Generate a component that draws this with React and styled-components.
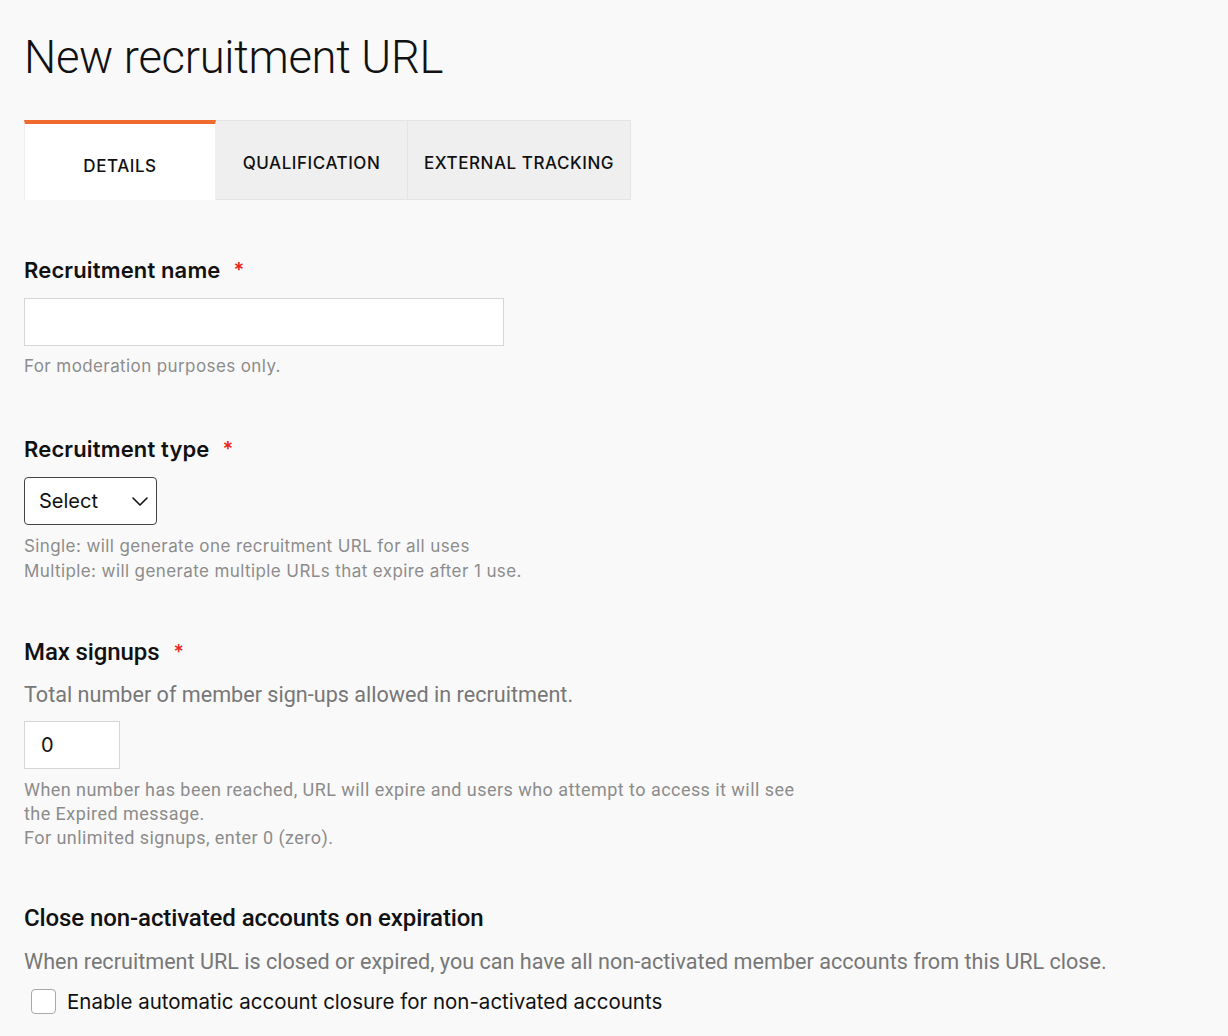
import styled, { createGlobalStyle } from "styled-components";

const GlobalStyle = createGlobalStyle`
  body {
    margin: 0;
    background: #f9f9f9;
    font-family: "Inter", "Noto Sans", sans-serif;
    color: #111;
  }
`;

const Page = styled.div`
  padding: 28px 24px 24px;
`;

const Title = styled.h1`
  margin: 0;
  font-family: "Roboto", sans-serif;
  font-weight: 300;
  font-size: 45.4px;
  line-height: 60px;
  color: #111;
  letter-spacing: -0.3px;
`;

const Tabs = styled.div`
  display: flex;
  margin-top: 32px;
  width: fit-content;
`;

const Tab = styled.div`
  display: flex;
  align-items: center;
  justify-content: center;
  box-sizing: border-box;
  height: 80px;
  width: ${(p) => p.w}px;
  font-family: "Inter", sans-serif;
  font-weight: 500;
  font-size: 17px;
  letter-spacing: 0.55px;
  color: #111;
  background: ${(p) => (p.active ? "#fff" : "#efefef")};
  border: 1px solid ${(p) => (p.active ? "#f0f0f0" : "#e4e4e4")};
  border-left: ${(p) => (p.first ? "1px solid #eee" : "none")};
  border-top: ${(p) => (p.active ? "4px solid #ee6a2d" : "1px solid #e4e4e4")};
  border-bottom: ${(p) => (p.active ? "none" : "1px solid #e4e4e4")};
  padding-top: ${(p) => (p.active ? "7px" : "6px")};
`;

const Field = styled.section`
  margin-top: ${(p) => p.top}px;
`;

const Label = styled.div`
  display: flex;
  align-items: flex-start;
  font-family: ${(p) => (p.roboto ? '"Roboto", sans-serif' : '"Inter", sans-serif')};
  font-weight: ${(p) => (p.roboto ? 500 : 600)};
  font-size: ${(p) => (p.roboto ? 24 : 22)}px;
  line-height: 30px;
  color: #111;
  letter-spacing: ${(p) => (p.roboto ? "-0.1px" : "0.15px")};
`;

const Star = styled.span`
  color: #e8261b;
  font-family: "Inter", sans-serif;
  font-size: 20px;
  line-height: 20px;
  margin-left: ${(p) => p.gap}px;
  margin-top: 5px;
`;

const TextInput = styled.input`
  display: block;
  box-sizing: border-box;
  width: ${(p) => p.w}px;
  height: 48px;
  margin-top: ${(p) => p.top}px;
  background: #fff;
  border: 1px solid #d6d6d6;
  border-radius: 0;
  padding: 0 16px;
  font-family: "Inter", sans-serif;
  font-size: 20px;
  color: #111;
  outline: none;
`;

const SelectBox = styled.div`
  display: flex;
  align-items: center;
  justify-content: space-between;
  box-sizing: border-box;
  width: 133px;
  height: 48px;
  margin-top: 13px;
  padding: 0 6px 0 14px;
  background: #fff;
  border: 1px solid #444;
  border-radius: 4px;
  font-size: 20px;
  color: #111;
`;

const Help = styled.div`
  margin-top: ${(p) => p.top}px;
  font-family: ${(p) => (p.roboto ? '"Roboto", sans-serif' : '"Inter", sans-serif')};
  font-size: ${(p) => (p.roboto ? 18 : 17)}px;
  line-height: ${(p) => (p.roboto ? 24 : 25)}px;
  color: #8c8c8c;
  max-width: 785px;
  letter-spacing: ${(p) => (p.roboto ? "0.45px" : "0.4px")};
`;

const Lead = styled.div`
  margin-top: ${(p) => p.top}px;
  font-family: "Roboto", sans-serif;
  font-size: 21.6px;
  line-height: 28px;
  color: #777;
`;

const CheckRow = styled.label`
  display: flex;
  align-items: center;
  gap: 11px;
  margin-top: 13px;
  padding-left: 7px;
  font-size: 20.5px;
  color: #111;
`;

const Box = styled.span`
  box-sizing: border-box;
  width: 25px;
  height: 25px;
  background: #fff;
  border: 1px solid #a8a8a8;
  border-radius: 4px;
`;

const Chevron = () => (
  <svg width="20" height="20" viewBox="0 0 20 20" fill="none">
    <path d="M3 7l7 7 7-7" stroke="#111" strokeWidth="1.6" strokeLinecap="round" strokeLinejoin="round" />
  </svg>
);

export default function App() {
  return (
    <Page>
      <GlobalStyle />
      <Title>New recruitment URL</Title>
      <Tabs>
        <Tab active first w={192}>DETAILS</Tab>
        <Tab w={192}>QUALIFICATION</Tab>
        <Tab w={223}>EXTERNAL TRACKING</Tab>
      </Tabs>

      <Field top={55}>
        <Label>
          Recruitment name<Star gap={13}>*</Star>
        </Label>
        <TextInput w={480} top={13} />
        <Help top={8}>For moderation purposes only.</Help>
      </Field>

      <Field top={55}>
        <Label>
          Recruitment type<Star gap={13}>*</Star>
        </Label>
        <SelectBox>
          Select <Chevron />
        </SelectBox>
        <Help top={9}>
          Single: will generate one recruitment URL for all uses
          <br />
          Multiple: will generate multiple URLs that expire after 1 use.
        </Help>
      </Field>

      <Field top={53}>
        <Label roboto>
          Max signups<Star gap={14}>*</Star>
        </Label>
        <Lead top={14}>Total number of member sign-ups allowed in recruitment.</Lead>
        <TextInput w={96} top={12} defaultValue="0" />
        <Help top={9} roboto>
          When number has been reached, URL will expire and users who attempt to access it will see the Expired
          message.
          <br />
          For unlimited signups, enter 0 (zero).
        </Help>
      </Field>

      <Field top={53}>
        <Label roboto>Close non-activated accounts on expiration</Label>
        <Lead top={15}>
          When recruitment URL is closed or expired, you can have all non-activated member accounts from this URL close.
        </Lead>
        <CheckRow>
          <Box />
          Enable automatic account closure for non-activated accounts
        </CheckRow>
      </Field>
    </Page>
  );
}
